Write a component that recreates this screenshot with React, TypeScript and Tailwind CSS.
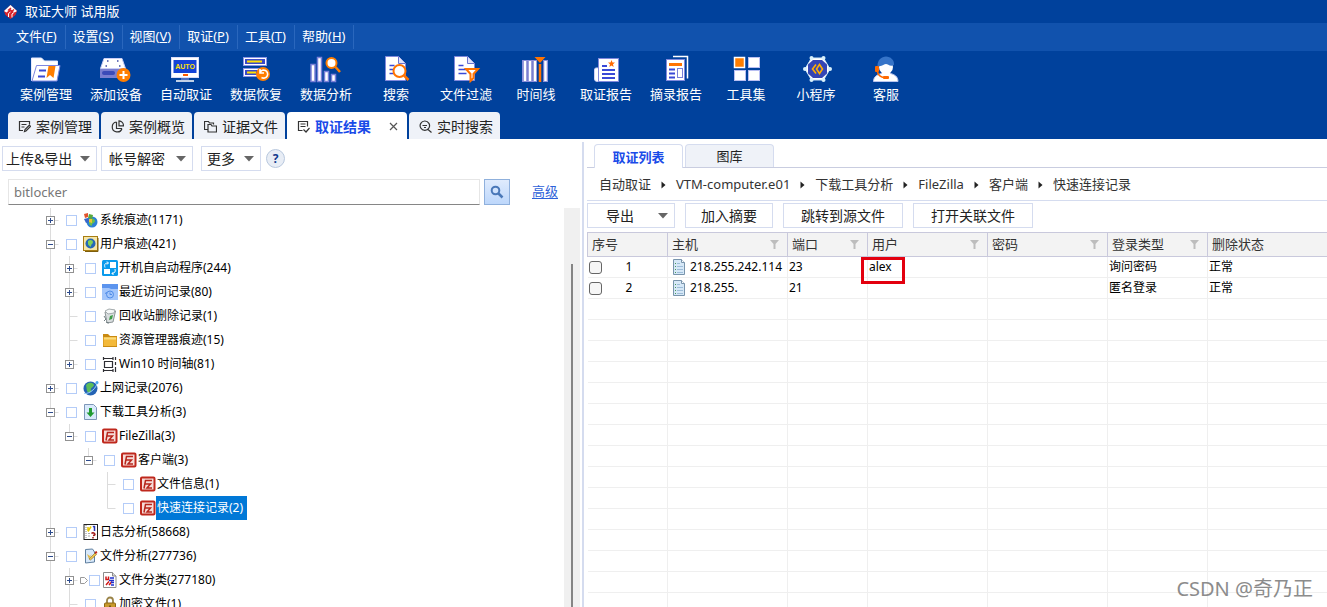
import { useState } from 'react';
import type { ReactNode } from 'react';
import clsx from 'clsx';

const FONT = "font-['Noto_Sans','Noto_Sans_CJK_SC',sans-serif]";

/* ---------- toolbar icons, all on a 32x28 canvas ---------- */

const DocShape = ({ x }: { x: number }) => (
  <>
    <path d={`M${x} 1.5h13l7 7v17h-20z`} fill="#fff" stroke="#8088dc" />
    <path d={`M${x + 13} 1.5v7h7`} fill="#dfe3fb" stroke="#6a73d0" />
    <path d={`M${x + 4} 10.5h5M${x + 4} 14.5h8M${x + 4} 18.5h8`} stroke="#3a49d6" strokeWidth="1.6" />
  </>
);

const toolIcons: Record<string, ReactNode> = {
  folder: (
    <>
      <path d="M1.5 26V3h10l3 3h13v4" fill="#fff" stroke="#e5e8ff" />
      <path d="M6.500 10.500h23.500l-3 15.500h-25z" fill="#fff" stroke="#7d86e0" />
      <path d="M9 15.500h7M8 21.500h7" stroke="#3a49d6" strokeWidth="2" />
      <path d="M18.500 11h7l-2 12-3.500-3-3.500 3z" fill="#ff7e00" />
    </>
  ),
  device: (
    <>
      <path d="M4 3.500h18l3.500 10h-25z" fill="#fff" stroke="#c9cdf5" />
      <path d="M7 6h1.500M17 6h1.500M5.500 11h1.500M19 11h1.500" stroke="#3a49a6" strokeWidth="1.500" />
      <rect x="0" y="14" width="26" height="9" fill="#7a7fd0" />
      <rect x="2" y="16" width="13" height="4" rx="2" fill="#3b4bb8" />
      <circle cx="23.500" cy="20" r="7" fill="#ff7e00" />
      <path d="M19.500 20h8M23.500 16v8" stroke="#fff" strokeWidth="2" />
    </>
  ),
  auto: (
    <>
      <rect x="1.500" y="2.500" width="27" height="20" fill="#fff" stroke="#d9dcf8" />
      <rect x="3.500" y="5" width="23" height="13" fill="#1444d8" />
      <text x="15" y="14" textAnchor="middle" fontSize="7" fontWeight="700" fill="#ffe100" fontFamily="Liberation Sans, sans-serif">AUTO</text>
      <rect x="13" y="19" width="5" height="2" fill="#ff5a00" />
      <path d="M11 24h8" stroke="#9aa2ea" />
      <path d="M6 26h18" stroke="#fff" strokeWidth="1.500" />
    </>
  ),
  recover: (
    <>
      <rect x="3.500" y="2.500" width="23" height="8" fill="#fff" stroke="#8d95e4" />
      <rect x="5" y="4" width="20" height="5" fill="#3a49c8" />
      <path d="M7 6.500h15" stroke="#ffe100" strokeWidth="2" />
      <rect x="3.500" y="13.500" width="20" height="8" fill="#fff" stroke="#8d95e4" />
      <rect x="5" y="15" width="14" height="5" fill="#3a49c8" />
      <path d="M7 17.500h9" stroke="#ffe100" strokeWidth="2" />
      <circle cx="23" cy="19" r="7" fill="#ff7e00" />
      <path d="M20 17.500a4 4 0 1 1 1.500 5M20 14v4h4" fill="none" stroke="#fff" strokeWidth="1.600" />
    </>
  ),
  analyze: (
    <>
      <g fill="#fff" stroke="#7a80d8" strokeWidth="1.500">
        <rect x="1" y="9.500" width="4" height="17" />
        <rect x="7.500" y="2.500" width="4" height="24" />
        <rect x="14.500" y="16.500" width="4" height="10" />
        <rect x="21.500" y="19.500" width="4" height="7" />
      </g>
      <circle cx="21.500" cy="8" r="5" fill="#fff" stroke="#ff7e00" strokeWidth="2" />
      <path d="M25.500 12l4.500 5" stroke="#ff7e00" strokeWidth="2.500" />
    </>
  ),
  search: (
    <>
      <DocShape x={5.5} />
      <circle cx="19.500" cy="16" r="6" fill="#fff" stroke="#ff7300" strokeWidth="2" />
      <path d="M24 20.500l4.500 4.500" stroke="#ff7300" strokeWidth="2.500" />
    </>
  ),
  filter: (
    <>
      <DocShape x={4.5} />
      <path d="M16 14h12l-4.500 5v4l-3 3v-7z" fill="#fff" stroke="#ff7300" strokeWidth="2" />
    </>
  ),
  timeline: (
    <>
      <rect x="2.500" y="5.500" width="25" height="21" fill="#7a7fd0" stroke="#8b90dc" />
      <path d="M5 6v20M10 6v20M15 6v20M25.500 6v20" stroke="#fff" strokeWidth="2.500" />
      <rect x="17" y="5" width="6" height="22" fill="#00419f" />
      <path d="M14.500 2h11l-5.500 6z" fill="#ff7300" />
      <path d="M20 9v18" stroke="#ff7300" strokeWidth="2.500" />
    </>
  ),
  report: (
    <>
      <path d="M9 13H6q-1.500 0-1.500 2v9q0 2.500 3 2.500H10z" fill="#fff" stroke="#d0d4f8" />
      <rect x="8.500" y="3.500" width="20" height="23" fill="#fff" stroke="#8088dc" />
      <path d="M12 11h5M12 15h13M12 19h13M12 23h13" stroke="#3a49d6" strokeWidth="1.800" />
      <path d="M21.500 5l1 2.500h2.500l-2 1.700.7 2.800-2.200-1.600-2.200 1.600.7-2.800-2-1.700h2.500z" fill="#ff6a00" />
    </>
  ),
  excerpt: (
    <>
      <path d="M13 1.500h14.500v22" fill="none" stroke="#fff" strokeWidth="1.500" />
      <rect x="6.500" y="4.500" width="18" height="21" fill="#fff" stroke="#8088dc" />
      <rect x="9" y="8" width="13" height="3" fill="#ff7300" />
      <path d="M9 14.500h6M9 18.500h6M9 22.500h6" stroke="#3a49d6" strokeWidth="1.800" />
      <rect x="17.500" y="13.500" width="5" height="9" fill="#fff" stroke="#7a80d8" />
    </>
  ),
  tools: (
    <>
      <rect x="4.500" y="2.500" width="10" height="10" fill="#ff7e00" stroke="#fff" strokeWidth="1.500" />
      <rect x="18.500" y="2.500" width="11" height="10" fill="#fff" stroke="#b9bff2" />
      <rect x="4.500" y="15.500" width="11" height="10" fill="#fff" stroke="#b9bff2" />
      <rect x="18.500" y="15.500" width="11" height="10" fill="#fff" stroke="#b9bff2" />
    </>
  ),
  applet: (
    <>
      <path d="M11.500 3h12L30 14l-6.500 11h-12L5 14z" fill="#fff" stroke="#cfe6f7" />
      <path d="M13 5h9l5 4.500v9L22 23h-9l-5-4.500v-9z" fill="#3445b4" />
      <g fill="#d7f0fb">
        <circle cx="11.500" cy="3" r="2" />
        <circle cx="23.500" cy="3" r="2" />
        <circle cx="30" cy="14" r="2" />
        <circle cx="23.500" cy="25" r="2" />
        <circle cx="11.500" cy="25" r="2" />
        <circle cx="5" cy="14" r="2" />
      </g>
      <path d="M16 9.500L12.500 14l3.500 4.500M19.500 9.500L16.500 14l3 4.500 3-4.500z" fill="none" stroke="#ffae00" strokeWidth="1.600" />
    </>
  ),
  service: (
    <>
      <path d="M3.500 26.500c0-5 4-7 8-8l1-2h7l1 2c4 1 7.500 3 7.500 8z" fill="#fff" stroke="#b9c4ee" />
      <circle cx="16" cy="12" r="7" fill="#fff" />
      <path d="M7.500 11c0-6 4-9.500 8.500-9.500s8.500 3.500 8 8.500c-4 2-6-1-8-1s-4 3-8.500 2z" fill="#3674c8" />
      <rect x="5" y="11" width="4" height="6" rx="1" fill="#ff6a00" />
      <path d="M7.500 17c1 4 4 5.500 8 5.500" fill="none" stroke="#ff6a00" strokeWidth="1.500" />
      <rect x="13" y="21" width="6" height="3" rx="1" fill="#ff6a00" />
    </>
  ),
};

const tools = [
  { label: '案例管理', icon: 'folder' },
  { label: '添加设备', icon: 'device' },
  { label: '自动取证', icon: 'auto' },
  { label: '数据恢复', icon: 'recover' },
  { label: '数据分析', icon: 'analyze' },
  { label: '搜索', icon: 'search' },
  { label: '文件过滤', icon: 'filter' },
  { label: '时间线', icon: 'timeline' },
  { label: '取证报告', icon: 'report' },
  { label: '摘录报告', icon: 'excerpt' },
  { label: '工具集', icon: 'tools' },
  { label: '小程序', icon: 'applet' },
  { label: '客服', icon: 'service' },
];

const menus = [
  ['文件', 'F'],
  ['设置', 'S'],
  ['视图', 'V'],
  ['取证', 'P'],
  ['工具', 'T'],
  ['帮助', 'H'],
];

/* ---------- page tabs ---------- */

const tabIcons: Record<string, ReactNode> = {
  edit: <path d="M5 10.500H1.500V1.500h10V4M3.500 4.500h5M3.500 7h3M6.500 11.500l.5-2 4.500-4.500 1 1.500-4.500 4.500z" />,
  pie: <path d="M5.500 2a5 5 0 1 0 5.500 6.500M5.500 2v6.500H11M8 .8v5h4.500A5 5 0 0 0 8 .8z" />,
  files: <path d="M3.500 9.500h-3v-8h4l1 1.500h4v1.500M4 4.500h3l1 1.500h4.500v6H4z" />,
  result: <path d="M5.500 10.500h-4v-9h9v5M3.500 4h5M3.500 6.500h5M6.500 9.500l2.500 2.500 3.500-4" />,
  zoom: <path d="M5.800 1a4.700 4.700 0 1 0 .1 0zM9 9.500l3.500 3M3.500 5.500H8M5 7.500h2" />,
};

const pageTabs = [
  { label: '案例管理', icon: 'edit' },
  { label: '案例概览', icon: 'pie' },
  { label: '证据文件', icon: 'files' },
  { label: '取证结果', icon: 'result', closable: true },
  { label: '实时搜索', icon: 'zoom' },
];

/* ---------- tree ---------- */

const treeIcons: Record<string, ReactNode> = {
  system: (
    <>
      <circle cx="9" cy="10" r="5.500" fill="#2b7fd4" />
      <path d="M6 8c3-3 6-1 6 1s-3 2-3 4-3 0-3-2z" fill="#6cc04a" />
      <path d="M1 2l4-1v4L2 6z" fill="#e2532d" />
      <path d="M6 2l4 1-1 4-4-1z" fill="#5aa83a" />
      <path d="M1 7l4-1 1 4-3 1z" fill="#3866c8" />
      <path d="M6 7l3 0 0 4-3-1z" fill="#f1c232" />
    </>
  ),
  user: (
    <>
      <rect x="0.500" y="0.500" width="14" height="14" fill="#f6e6a8" stroke="#a87d12" />
      <path d="M15 2v13.500H2" fill="none" stroke="#7d5d0c" />
      <circle cx="7.500" cy="7.500" r="5" fill="#2467b8" />
      <path d="M5 5c2-2 5-1 5 1s-2 2-2 4-3-1-3-2z" fill="#7fd05a" />
    </>
  ),
  startup: (
    <>
      <rect width="16" height="16" rx="1.500" fill="#0a9bec" />
      <rect x="8" y="2" width="6" height="6" fill="#fff" />
      <rect x="2" y="9" width="6" height="5" fill="#fff" />
      <path d="M3 7.500c-1-3 0-4.500 3-4.500M5 1.500L6.500 3 5 4.500M13 9c1 3-1 4.500-3 4.500M11.500 12L10 13.500l1.500 1.500" fill="none" stroke="#fff" />
    </>
  ),
  recent: (
    <>
      <path d="M0 0h16v16H0z" fill="#5b94ee" />
      <path d="M0 4h7l2 1h7v11H0z" fill="#a3c6fb" />
      <circle cx="8" cy="10.500" r="3.500" fill="none" stroke="#4f8ce8" />
      <path d="M8 8.500v2h2M4.500 8l-1 2" fill="none" stroke="#4f8ce8" />
    </>
  ),
  recycle: (
    <>
      <path d="M3 4l9-2 1.500 1L11 14l-6 1z" fill="#d9dedf" stroke="#8c9496" />
      <path d="M3 3l4-2 6 1-1 3-6 1z" fill="#f5f7f7" stroke="#a4abad" />
      <path d="M8 8l3-1-1 4-3 1z" fill="#3d9c46" />
      <path d="M2 8l2 3-2 2M4 14l3 1" stroke="#6f7b80" fill="none" />
    </>
  ),
  explorer: (
    <>
      <path d="M1 2h5l2 2h7v11H1z" fill="#c98a12" />
      <path d="M1.500 5h13v9h-13z" fill="#f3b93a" />
      <path d="M2 5.500h12v2H2z" fill="#fadb7c" />
    </>
  ),
  win10: (
    <path
      d="M1 2.500h10.500M1 14.500h10.500M1.500 1v3M1.500 13v3M11 1v3M11 13v3M2.500 5.500h8v6h-8zM13.500 1v3M13.500 6v3M13.500 11v5"
      fill="none"
      stroke="#2e2e33"
      strokeWidth="1.200"
    />
  ),
  web: (
    <>
      <circle cx="7.500" cy="8.500" r="7" fill="#2463b4" />
      <path d="M3 5c3-4 8-2 8 0s-4 3-3 5-2 4-4 1z" fill="#5cbd5a" />
      <path d="M1 13.500C7 14 14 8 14.500 1.500" fill="none" stroke="#9fd3f8" />
      <circle cx="14" cy="2.500" r="1.500" fill="#4aa6f0" />
    </>
  ),
  download: (
    <>
      <path d="M1.500 0.500h9l3 3v12h-12z" fill="#d8e9fb" stroke="#7e96b8" />
      <path d="M6 4h3v4.500h2.500l-4 4.500-4-4.500H6z" fill="#1f9a30" />
    </>
  ),
  filezilla: (
    <>
      <rect x="1" y="1.500" width="13.500" height="13" rx="1" fill="#f6dcd8" stroke="#bf281d" strokeWidth="2" />
      <path d="M12 4.500H5.500L4 12.500M5 8h5.500L7 12h5" stroke="#b7261c" fill="none" strokeWidth="1.500" />
    </>
  ),
  log: (
    <>
      <rect x="1" y="0.500" width="13.500" height="15" fill="#fff" stroke="#222" />
      <path d="M3 1v14" stroke="#888" strokeDasharray="1 1" />
      <path d="M5 3v4M8 2.500l-3 5" stroke="#e8c800" strokeWidth="1.500" />
      <path d="M5 9.500h2M5 12h2" stroke="#aaa" />
      <path d="M11.500 2v5M10 3l1.500-1" stroke="#2436b8" strokeWidth="1.500" />
      <path d="M8.500 9.500q1.500-1.500 3 0T10 11.500M10 13v1.500" fill="none" stroke="#a01818" strokeWidth="1.500" />
    </>
  ),
  analysis: (
    <>
      <path d="M2.500 1.500l7-0.500 2 3v10l-9 1z" fill="#d8e9fb" stroke="#5f7f9f" />
      <path d="M4 6l3 2 2-2-3 5z" fill="#e0b84a" />
      <path d="M6 11l6-6 1.500 1.500-6 5.500z" fill="#f0c84a" stroke="#8c6a1c" strokeWidth="0.600" />
      <path d="M12 5l2-1" stroke="#c02a1c" strokeWidth="2" />
    </>
  ),
  classify: (
    <>
      <path d="M1.500 0.500h9l3.500 3.500v11.500h-12.500z" fill="#fff" stroke="#8b8b8b" />
      <path d="M10.500 0.500V4H14" fill="#ddd" stroke="#8b8b8b" />
      <path d="M4 4.500v3h2.500v-3M4 13l3-3.500M7 13l3-3.500" fill="none" stroke="#d01818" strokeWidth="1.500" />
      <path d="M8 6h4M7 8.500h5M9 10.500h3M9 13h3" stroke="#1c2fd0" strokeWidth="1.500" />
    </>
  ),
  lock: (
    <>
      <path d="M5 7V4.500a3 3 0 0 1 6 0V7" fill="none" stroke="#9a8348" strokeWidth="1.800" />
      <rect x="2.500" y="7" width="11" height="8" rx="1" fill="#c99a2c" stroke="#8e6815" />
      <path d="M8 9.500v3" stroke="#5c430c" strokeWidth="1.500" />
    </>
  ),
};

interface TreeNode {
  label: string;
  icon: string;
  // one entry per ancestor: does its line run on past this row
  guides: boolean[];
  state?: 'open' | 'closed';
  last?: boolean;
  flag?: boolean;
}

const treeNodes: TreeNode[] = [
  { label: '系统痕迹(1171)', icon: 'system', guides: [], state: 'closed' },
  { label: '用户痕迹(421)', icon: 'user', guides: [], state: 'open' },
  { label: '开机自启动程序(244)', icon: 'startup', guides: [true], state: 'closed' },
  { label: '最近访问记录(80)', icon: 'recent', guides: [true], state: 'closed' },
  { label: '回收站删除记录(1)', icon: 'recycle', guides: [true] },
  { label: '资源管理器痕迹(15)', icon: 'explorer', guides: [true] },
  { label: 'Win10 时间轴(81)', icon: 'win10', guides: [true], state: 'closed', last: true },
  { label: '上网记录(2076)', icon: 'web', guides: [], state: 'closed' },
  { label: '下载工具分析(3)', icon: 'download', guides: [], state: 'open' },
  { label: 'FileZilla(3)', icon: 'filezilla', guides: [true], state: 'open', last: true },
  { label: '客户端(3)', icon: 'filezilla', guides: [true, false], state: 'open', last: true },
  { label: '文件信息(1)', icon: 'filezilla', guides: [true, false, false] },
  { label: '快速连接记录(2)', icon: 'filezilla', guides: [true, false, false], last: true },
  { label: '日志分析(58668)', icon: 'log', guides: [], state: 'closed' },
  { label: '文件分析(277736)', icon: 'analysis', guides: [], state: 'open' },
  { label: '文件分类(277180)', icon: 'classify', guides: [true], state: 'closed', flag: true },
  { label: '加密文件(1)', icon: 'lock', guides: [true] },
];

const Guide = ({ on }: { on: boolean }) => (
  <svg width="19" height="24" className="shrink-0">
    {on && <path d="M9.500 0v24" stroke="#dcdcdc" />}
  </svg>
);

const Joint = ({ state, last }: { state?: 'open' | 'closed'; last?: boolean }) => (
  <svg width="19" height="24" className="shrink-0">
    <path d={last ? 'M9.500 0v12.500h8' : 'M9.500 0v24M9.500 12.500h8'} fill="none" stroke="#dcdcdc" />
    {state && (
      <>
        <rect x="5.500" y="8.500" width="8" height="8" fill="#fff" stroke="#919191" />
        <path d={state === 'closed' ? 'M7 12.500h5M9.500 10v5' : 'M7 12.500h5'} stroke="#2c4a8c" />
      </>
    )}
  </svg>
);

const TreeRow = ({ node, selected, onSelect }: { node: TreeNode; selected: boolean; onSelect: () => void }) => (
  <li className="flex h-6 items-center">
    {node.guides.map((on, i) => (
      <Guide key={i} on={on} />
    ))}
    <Joint state={node.state} last={node.last} />
    {node.flag && (
      <svg width="10" height="9" className="shrink-0">
        <path d="M1.500 1.500h4l3 3-3 3h-4z" fill="#fff" stroke="#9a9a9a" />
      </svg>
    )}
    <input
      type="checkbox"
      aria-label={node.label}
      className={clsx(
        'size-[11px] shrink-0 appearance-none border border-[#b4ccf8] bg-white checked:bg-[#3b78e7]',
        node.flag ? 'mr-0.5' : 'mx-1.5',
      )}
    />
    <svg width="16" height="16" className="shrink-0">
      {treeIcons[node.icon]}
    </svg>
    <button
      type="button"
      onClick={onSelect}
      className={clsx(
        'h-6 pr-1 pl-px text-xs whitespace-nowrap',
        selected ? 'bg-[#0078d7] text-white' : 'text-black',
      )}
    >
      {node.label}
    </button>
  </li>
);

/* ---------- small shared parts ---------- */

const Caret = () => (
  <svg width="10" height="6" className="shrink-0">
    <path d="M0 0h10L5 5.500z" fill="#666" />
  </svg>
);

const DropButton = ({ label, className }: { label: string; className: string }) => (
  <button
    type="button"
    aria-haspopup="menu"
    className={clsx(
      'flex h-[25px] items-center justify-between border border-[#d5dcef] bg-white text-sm whitespace-nowrap text-[#222]',
      className,
    )}
  >
    {label}
    <Caret />
  </button>
);

const PlainButton = ({ label, className }: { label: string; className: string }) => (
  <button
    type="button"
    className={clsx('h-[25px] border border-[#d5dcef] bg-white text-sm leading-5 text-[#222]', className)}
  >
    {label}
  </button>
);

const crumbs = ['自动取证', 'VTM-computer.e01', '下载工具分析', 'FileZilla', '客户端', '快速连接记录'];

const columns = [
  { title: '序号', width: 'w-20', filter: false },
  { title: '主机', width: 'w-30', filter: true },
  { title: '端口', width: 'w-20', filter: true },
  { title: '用户', width: 'w-30', filter: true },
  { title: '密码', width: 'w-30', filter: true },
  { title: '登录类型', width: 'w-25', filter: true },
  { title: '删除状态', width: '', filter: false },
];

const records = [
  { host: '218.255.242.114', port: '23', user: 'alex', type: '询问密码', status: '正常' },
  { host: '218.255.', port: '21', user: '', type: '匿名登录', status: '正常' },
];

const BLANK_ROWS = 15;

const HostIcon = () => (
  <svg width="14" height="16" className="shrink-0">
    <path d="M1.500 0.500h8l3 3v12h-11z" fill="#d6e8f7" stroke="#7894ac" />
    <path d="M9.500 0.500v3h3" fill="#fff" stroke="#7894ac" />
    <path d="M3 4.500h1M3 7.500h1M3 10.500h1M3 13.500h1" stroke="#4a9a5a" />
    <path d="M5 4.500h3M5 7.500h6M5 10.500h6M5 13.500h6" stroke="#9dbdd9" />
  </svg>
);

const Header = () => (
  <header className="bg-[#00419c] text-white">
    <div className="flex h-[23px] items-center gap-[7px] pl-1 text-[13px]">
      <svg width="14" height="16">
        <path d="M6.500 1l6.500 6-1.500 4-5 4-5-4L0 7z" fill="#d8242c" />
        <path d="M0 7l6.500-6L13 7l-2.500 1.500-4-3.500L2.500 8.500z" fill="#fff" />
        <path d="M4 6.500l3-2.500M7 8l3-2.500" stroke="#d8242c" strokeWidth="1.500" />
        <path d="M4.500 13V9.500L6.500 8M8 13.500V10l2-1.500" fill="none" stroke="#fff" />
      </svg>
      <h1>取证大师 试用版</h1>
    </div>
    <nav className="flex h-7 items-center bg-[#1152ad] pl-[9px] text-[13px]">
      {menus.map(([name, key]) => (
        <button key={key} type="button" className="h-6 border-r border-[#2a67bd] pr-2 pl-[7px] whitespace-nowrap">
          {name}(<u>{key}</u>)
        </button>
      ))}
    </nav>
    <div className="flex h-[61px] pl-[11px]">
      {tools.map((tool) => (
        <button key={tool.label} type="button" className="flex w-[70px] flex-col items-center pt-1 text-[13px]">
          <svg width="32" height="28">
            {toolIcons[tool.icon]}
          </svg>
          <span className="mt-px leading-5">{tool.label}</span>
        </button>
      ))}
    </div>
  </header>
);

const PageTabs = () => {
  const [active, setActive] = useState('取证结果');

  return (
    <div className="flex gap-0.5 bg-[#00419c] pl-2">
      {pageTabs.map((tab) => (
        <div
          key={tab.label}
          className={clsx(
            'flex h-[27px] items-center rounded-t pt-0.5',
            active === tab.label ? 'bg-white font-bold text-[#1a4be8]' : 'bg-[#eff2f8] text-[#222]',
          )}
        >
          <button
            type="button"
            onClick={() => setActive(tab.label)}
            className="flex h-full items-center gap-[5px] pr-[7px] pl-2.5 text-sm whitespace-nowrap"
          >
            <svg width="13" height="13" fill="none" stroke="#333" strokeWidth="1.200">
              {tabIcons[tab.icon]}
            </svg>
            {tab.label}
          </button>
          {tab.closable && (
            <button type="button" aria-label="关闭" className="mr-2 ml-2.5 flex size-[11px] items-center justify-center">
              <svg width="9" height="9">
                <path d="M1 1l7 7M8 1L1 8" stroke="#555" strokeWidth="1.200" />
              </svg>
            </button>
          )}
        </div>
      ))}
    </div>
  );
};

const Sidebar = () => {
  const [keyword, setKeyword] = useState('bitlocker');
  const [selected, setSelected] = useState('快速连接记录(2)');

  return (
    <aside className="flex w-[582px] shrink-0 flex-col pt-[7px]">
      <div className="flex items-center pl-0.5">
        <DropButton label="上传&导出" className="w-[95px] pr-1.5 pl-[3px]" />
        <DropButton label="帐号解密" className="ml-1 w-[92px] pr-1.5 pl-[7px]" />
        <DropButton label="更多" className="ml-2 w-[60px] pr-1.5 pl-[5px]" />
        <button
          type="button"
          className="ml-[5px] size-[19px] rounded-full border border-[#b8c8de] bg-[#e8edf5] text-xs leading-4 font-bold text-[#123a8c]"
        >
          ?
        </button>
      </div>
      <div className="mt-[7px] flex h-[27px] items-center pl-2">
        <input
          type="text"
          aria-label="搜索"
          value={keyword}
          onChange={(e) => setKeyword(e.target.value)}
          className="h-[26px] min-w-0 flex-1 border border-[#e6e6e6] border-b-[#868686] px-[5px] text-[13px] text-[#777] outline-none"
        />
        <button
          type="button"
          aria-label="查找"
          className="ml-1 flex size-[26px] items-center justify-center border border-[#8fb0dc] bg-linear-to-b from-[#dfebfd] to-[#bdd7fb]"
        >
          <svg width="14" height="14" fill="none" stroke="#4a78b8">
            <circle cx="5.500" cy="5.500" r="3.800" strokeWidth="2" />
            <path d="M8.500 8.500l4 4" strokeWidth="2.500" />
          </svg>
        </button>
        <a href="#advanced" className="mr-6 ml-[22px] text-[13px] text-[#2e62d9] underline underline-offset-2">
          高级
        </a>
      </div>
      <div className="mt-[3px] flex min-h-0 flex-1">
        <ul className="min-w-0 flex-1 overflow-hidden pl-[41px]">
          {treeNodes.map((node) => (
            <TreeRow
              key={node.label}
              node={node}
              selected={selected === node.label}
              onSelect={() => setSelected(node.label)}
            />
          ))}
        </ul>
        <div className="mr-0.5 flex w-4 justify-center bg-[#f0f0f0] pt-14">
          <div className="w-0.5 bg-[#858585]" />
        </div>
      </div>
    </aside>
  );
};

const RecordTable = () => (
  <table className="w-full table-fixed border-collapse text-xs text-black">
    <colgroup>
      {columns.map((col) => (
        <col key={col.title} className={col.width} />
      ))}
    </colgroup>
    <thead>
      <tr className="h-6 bg-[#f3f3f3] text-left text-[13px] text-[#333]">
        {columns.map((col) => (
          <th key={col.title} className="border border-r-0 border-[#c9c9dc] p-0 font-normal">
            <div className="flex h-[22px] items-center justify-between pr-2 pl-1 whitespace-nowrap">
              {col.title}
              {col.filter && (
                <svg width="9" height="9">
                  <path d="M0 0h9L5.500 4v5h-2V4z" fill="#bdbdbd" />
                </svg>
              )}
            </div>
          </th>
        ))}
      </tr>
    </thead>
    <tbody className="[&_td]:border-b [&_td]:border-l [&_td]:border-[#efefef] [&_td]:px-px [&_td]:py-0 [&_td:first-child]:border-l-0">
      {records.map((row, i) => (
        <tr key={row.host} className="h-[21px]">
          <td>
            <label className="flex h-5 items-center">
              <input
                type="checkbox"
                className="size-[13px] appearance-none rounded-[3px] border border-[#666] bg-[#f6f6f6] checked:bg-[#3b78e7]"
              />
              <span className="ml-6">{i + 1}</span>
            </label>
          </td>
          <td>
            <div className="flex h-5 items-center gap-1 pl-[3px] whitespace-nowrap">
              <HostIcon />
              {row.host}
            </div>
          </td>
          <td>{row.port}</td>
          <td className="relative">
            {row.user}
            {row.user && <span className="absolute top-0 -left-[7px] h-[27px] w-11 border-3 border-[#e3000f]" />}
          </td>
          <td />
          <td>{row.type}</td>
          <td>{row.status}</td>
        </tr>
      ))}
      {Array.from({ length: BLANK_ROWS }, (_, i) => (
        <tr key={i} className="h-[21px]">
          {columns.map((col) => (
            <td key={col.title} />
          ))}
        </tr>
      ))}
    </tbody>
  </table>
);

const ResultPanel = () => {
  const [view, setView] = useState('取证列表');

  return (
    <main className="mt-[3px] min-w-0 flex-1 overflow-hidden border-l-2 border-[#d5dcef] pl-[3px]">
      <div className="flex h-[26px] items-end gap-0.5 border-b border-[#c9cde0] pl-[7px]">
        {['取证列表', '图库'].map((name) => (
          <button
            key={name}
            type="button"
            onClick={() => setView(name)}
            className={clsx(
              'w-[89px] rounded-t border border-b-0 border-[#d5dcef] text-[13px] leading-5',
              view === name ? '-mb-px h-6 bg-white font-bold text-[#1a4be8]' : 'h-[23px] bg-[#eff2f8] text-[#222]',
            )}
          >
            {name}
          </button>
        ))}
      </div>
      <nav className="flex h-[33px] items-center gap-2.5 border-b border-[#d5dcef] pt-0.5 pl-3 text-[13px] whitespace-nowrap text-[#333]">
        {crumbs.map((name, i) => (
          <div key={name} className="flex items-center gap-2.5">
            {i > 0 && (
              <svg width="5" height="8">
                <path d="M0.500 0.500v7L4.500 4z" fill="#222" />
              </svg>
            )}
            <a href={`#crumb-${i}`}>{name}</a>
          </div>
        ))}
      </nav>
      <div className="flex gap-2.5 pt-0.5 pb-1">
        <DropButton label="导出" className="w-[88px] pr-1.5 pl-[18px]" />
        <PlainButton label="加入摘要" className="w-[88px]" />
        <PlainButton label="跳转到源文件" className="w-[120px]" />
        <PlainButton label="打开关联文件" className="w-[120px]" />
      </div>
      <RecordTable />
    </main>
  );
};

export default function App() {
  return (
    <div className={clsx('relative flex h-screen flex-col overflow-hidden bg-white', FONT)}>
      <Header />
      <PageTabs />
      <div className="flex min-h-0 flex-1">
        <Sidebar />
        <ResultPanel />
      </div>
      <span className="absolute right-3.5 bottom-1 text-xl text-[#8c8c8c]">CSDN @奇乃正</span>
    </div>
  );
}
